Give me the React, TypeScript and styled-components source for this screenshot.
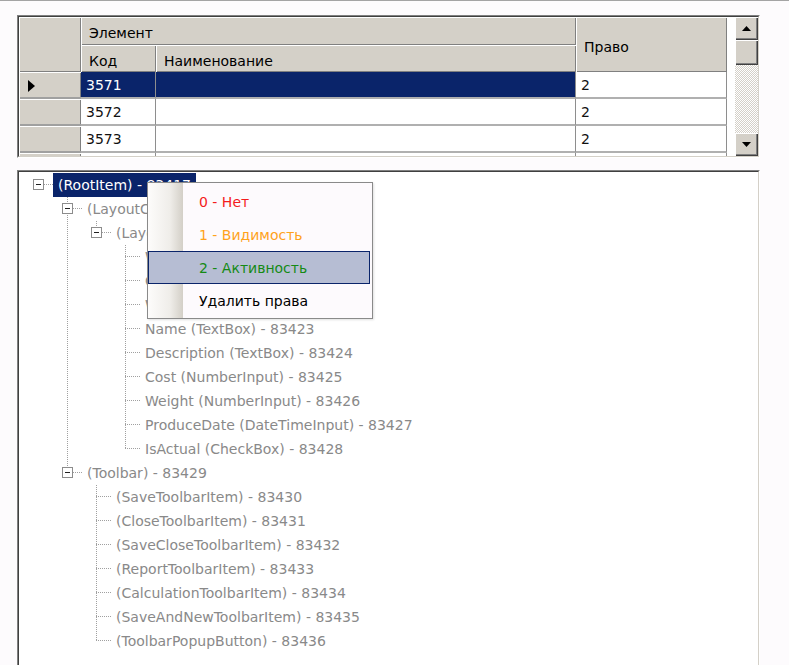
import React from "react";
import styled, { createGlobalStyle } from "styled-components";

const GlobalStyle = createGlobalStyle`
  html, body {
    margin: 0;
    padding: 0;
    background: #fdfbfd;
  }
  body {
    font-family: "DejaVu Sans", "Liberation Sans", sans-serif;
    font-size: 14px;
  }
  * {
    box-sizing: border-box;
  }
`;

const Page = styled.div`
  position: relative;
  width: 789px;
  height: 665px;
  overflow: hidden;
  border-top: 1px solid #a4a4a4;
  padding: 14px 0 0 17px;
`;

// classic 3d sunken frame: two 1px rings
const Sunken = styled.div<{ $height: number; $gap?: number }>`
  width: 743px;
  height: ${(p) => p.$height}px;
  margin-top: ${(p) => p.$gap ?? 0}px;
  border: 1px solid;
  border-color: #808080 #ffffff #ffffff #808080;
`;

const SunkenInner = styled.div`
  display: flex;
  height: 100%;
  overflow: hidden;
  background: #ffffff;
  border: 1px solid;
  border-color: #404040 #d4d0c8 #d4d0c8 #404040;
`;

/* ---------- grid ---------- */

const Table = styled.div`
  flex: none;
  display: grid;
  grid-template-columns: 62px 75px 420px 151px;
  grid-template-rows: 28px 27px 27px 27px 27px 27px;
  width: 708px;
  height: 100%;
  overflow: hidden;
`;

const HeaderCell = styled.div<{ $col: string; $row: string }>`
  grid-column: ${(p) => p.$col};
  grid-row: ${(p) => p.$row};
  display: flex;
  align-items: center;
  padding: 4px 0 0 8px;
  background: #d4d0c8;
  color: #000000;
  box-shadow: inset 1px 1px #ffffff, inset -1px -1px #808080;
  white-space: nowrap;
`;

const RowHeader = styled.div`
  display: flex;
  align-items: center;
  padding-left: 9px;
  background: #d4d0c8;
  box-shadow: inset 1px 1px #ffffff, inset 0 -2px #a0a0a0, inset -1px 0 #808080;
`;

const DataCell = styled.div<{ $selected?: boolean }>`
  display: flex;
  align-items: center;
  padding-left: 5px;
  background: ${(p) => (p.$selected ? "#0a246a" : "#ffffff")};
  color: ${(p) => (p.$selected ? "#ffffff" : "#111111")};
  border-right: 1px solid #8e8e8e;
  border-bottom: 2px solid #b0b0b0;
`;

const Filler = styled.div`
  flex: none;
  width: 8px;
  background: #ffffff;
`;

const ScrollBar = styled.div`
  flex: none;
  display: flex;
  flex-direction: column;
  width: 23px;
  height: 100%;
`;

const ScrollButton = styled.div<{ $size: number }>`
  flex: none;
  display: flex;
  align-items: center;
  justify-content: center;
  height: ${(p) => p.$size}px;
  background: #d4d0c8;
  box-shadow: inset 1px 1px #ffffff, inset -1px -1px #404040,
    inset -2px -2px #808080;
`;

const Track = styled.div`
  flex: 1;
  background: repeating-conic-gradient(#d4d0c8 0 25%, #ffffff 0 50%) 0 0 / 2px
    2px;
`;

/* ---------- tree ---------- */

const DOT_V = "repeating-linear-gradient(to bottom, #a0a0a0 0 1px, transparent 1px 2px)";
const DOT_H = "repeating-linear-gradient(to right, #a0a0a0 0 1px, transparent 1px 2px)";

const TreeBody = styled.div`
  display: flex;
  flex-direction: column;
  padding: 1px 0 0 5px;
`;

const TreeRow = styled.div`
  display: flex;
  height: 24px;
`;

const Guide = styled.div<{ $pipe: boolean }>`
  flex: none;
  width: 29px;
  background: ${(p) => (p.$pipe ? `${DOT_V} 14px 0 / 1px 100% no-repeat` : "none")};
`;

type JointKind = "root" | "tee" | "elbow";

const jointBg = (kind: JointKind) => {
  const h = `${DOT_H} 14px 11px / 15px 1px no-repeat`;
  if (kind === "root") return h;
  if (kind === "tee") return `${DOT_V} 14px 0 / 1px 100% no-repeat, ${h}`;
  return `${DOT_V} 14px 0 / 1px 12px no-repeat, ${h}`;
};

const Joint = styled.div<{ $kind: JointKind }>`
  flex: none;
  display: flex;
  align-items: flex-start;
  justify-content: center;
  width: 29px;
  background: ${(p) => jointBg(p.$kind)};
`;

const Expander = styled.div`
  display: flex;
  align-items: center;
  justify-content: center;
  width: 11px;
  height: 11px;
  margin-top: 6px;
  border: 1px solid #8c8c8c;
  background: #ffffff;

  &::after {
    content: "";
    width: 5px;
    height: 1px;
    background: #202020;
  }
`;

const Label = styled.span<{ $selected?: boolean }>`
  display: flex;
  align-items: center;
  padding: 0 5px;
  white-space: nowrap;
  color: ${(p) => (p.$selected ? "#ffffff" : "#898989")};
  background: ${(p) => (p.$selected ? "#0a246a" : "transparent")};
`;

/* ---------- context menu ---------- */

const Menu = styled.div`
  position: absolute;
  left: 147px;
  top: 181px;
  width: 226px;
  padding: 2px 2px 1px 0;
  border: 1px solid #8a8a8a;
  background: linear-gradient(
    to right,
    #fdfcfb 0,
    #efede9 22px,
    #d3cfc7 35px,
    #fdfafd 35px
  );
  box-shadow: 1px 1px 2px rgba(0, 0, 0, 0.12);
`;

const MenuItem = styled.div<{ $color: string; $active?: boolean }>`
  display: flex;
  align-items: center;
  height: 33px;
  padding-left: 50px;
  color: ${(p) => p.$color};
  border: 1px solid ${(p) => (p.$active ? "#0a246a" : "transparent")};
  background: ${(p) => (p.$active ? "#b6bdd3" : "transparent")};
  white-space: nowrap;
`;

/* ---------- data ---------- */

// last row is only a sliver at the bottom edge, its text is not visible
const rows = [
  { id: 1, code: "3571", name: "", right: "2", selected: true },
  { id: 2, code: "3572", name: "", right: "2" },
  { id: 3, code: "3573", name: "", right: "2" },
  { id: 4, code: "", name: "", right: "" },
];

type Node = {
  guides: boolean[];
  joint: JointKind;
  box?: boolean;
  text: string;
  selected?: boolean;
};

const layoutGuides = [false, true, false];
const toolbarGuides = [false, false];

const tree: Node[] = [
  { guides: [], joint: "root", box: true, text: "(RootItem) - 83417", selected: true },
  { guides: [false], joint: "tee", box: true, text: "(LayoutControl) - 83418" },
  { guides: [false, true], joint: "elbow", box: true, text: "(LayoutGroup) - 83419" },
  { guides: layoutGuides, joint: "tee", text: "Warehouse (LookUp) - 83420" },
  { guides: layoutGuides, joint: "tee", text: "Code (TextBox) - 83421" },
  { guides: layoutGuides, joint: "tee", text: "Width (NumberInput) - 83422" },
  { guides: layoutGuides, joint: "tee", text: "Name (TextBox) - 83423" },
  { guides: layoutGuides, joint: "tee", text: "Description (TextBox) - 83424" },
  { guides: layoutGuides, joint: "tee", text: "Cost (NumberInput) - 83425" },
  { guides: layoutGuides, joint: "tee", text: "Weight (NumberInput) - 83426" },
  { guides: layoutGuides, joint: "tee", text: "ProduceDate (DateTimeInput) - 83427" },
  { guides: layoutGuides, joint: "elbow", text: "IsActual (CheckBox) - 83428" },
  { guides: [false], joint: "elbow", box: true, text: "(Toolbar) - 83429" },
  { guides: toolbarGuides, joint: "tee", text: "(SaveToolbarItem) - 83430" },
  { guides: toolbarGuides, joint: "tee", text: "(CloseToolbarItem) - 83431" },
  { guides: toolbarGuides, joint: "tee", text: "(SaveCloseToolbarItem) - 83432" },
  { guides: toolbarGuides, joint: "tee", text: "(ReportToolbarItem) - 83433" },
  { guides: toolbarGuides, joint: "tee", text: "(CalculationToolbarItem) - 83434" },
  { guides: toolbarGuides, joint: "tee", text: "(SaveAndNewToolbarItem) - 83435" },
  { guides: toolbarGuides, joint: "elbow", text: "(ToolbarPopupButton) - 83436" },
];

const menuItems = [
  { text: "0 - Нет", color: "#f41c1c" },
  { text: "1 - Видимость", color: "#ffa21c" },
  { text: "2 - Активность", color: "#158a15", active: true },
  { text: "Удалить права", color: "#000000" },
];

const Arrow: React.FC<{ down?: boolean }> = ({ down }) => (
  <svg width="9" height="5" viewBox="0 0 9 5">
    <polygon points={down ? "0,0 9,0 4.5,5" : "4.5,0 9,5 0,5"} fill="#000" />
  </svg>
);

const RowMarker = () => (
  <svg width="7" height="12" viewBox="0 0 7 12">
    <polygon points="0,0 7,6 0,12" fill="#000" />
  </svg>
);

export default function App() {
  return (
    <>
      <GlobalStyle />
      <Page>
        <Sunken $height={143}>
          <SunkenInner>
            <Table>
              <HeaderCell $col="1" $row="1 / span 2" />
              <HeaderCell $col="2 / span 2" $row="1">
                Элемент
              </HeaderCell>
              <HeaderCell $col="4" $row="1 / span 2">
                Право
              </HeaderCell>
              <HeaderCell $col="2" $row="2">
                Код
              </HeaderCell>
              <HeaderCell $col="3" $row="2">
                Наименование
              </HeaderCell>
              {rows.map((r) => (
                <React.Fragment key={r.id}>
                  <RowHeader>{r.selected && <RowMarker />}</RowHeader>
                  <DataCell $selected={r.selected}>{r.code}</DataCell>
                  <DataCell $selected={r.selected}>{r.name}</DataCell>
                  <DataCell>{r.right}</DataCell>
                </React.Fragment>
              ))}
            </Table>
            <Filler />
            <ScrollBar>
              <ScrollButton $size={23}>
                <Arrow />
              </ScrollButton>
              <ScrollButton $size={25} />
              <Track />
              <ScrollButton $size={23}>
                <Arrow down />
              </ScrollButton>
            </ScrollBar>
          </SunkenInner>
        </Sunken>

        <Sunken $height={520} $gap={12}>
          <SunkenInner>
            <TreeBody>
              {tree.map((n) => (
                <TreeRow key={n.text}>
                  {n.guides.map((g, i) => (
                    <Guide key={i} $pipe={g} />
                  ))}
                  <Joint $kind={n.joint}>{n.box && <Expander />}</Joint>
                  <Label $selected={n.selected}>{n.text}</Label>
                </TreeRow>
              ))}
            </TreeBody>
          </SunkenInner>
        </Sunken>

        <Menu>
          {menuItems.map((m) => (
            <MenuItem key={m.text} $color={m.color} $active={m.active}>
              {m.text}
            </MenuItem>
          ))}
        </Menu>
      </Page>
    </>
  );
}
